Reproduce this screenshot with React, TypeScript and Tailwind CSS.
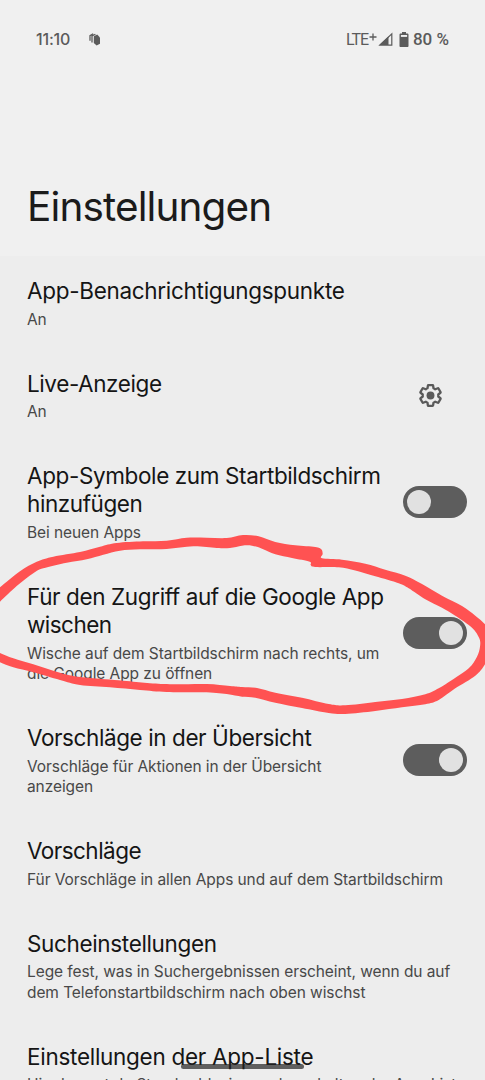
import { clsx } from 'clsx'

type Line = { text: string; tracking?: string }

type Setting = {
  title: Line[]
  summary: string[]
  control?: 'gear' | 'on' | 'off'
}

const settings: Setting[] = [
  {
    title: [{ text: 'App-Benachrichtigungspunkte', tracking: 'tracking-[-0.3px]' }],
    summary: ['An'],
  },
  {
    title: [{ text: 'Live-Anzeige', tracking: 'tracking-[-0.4px]' }],
    summary: ['An'],
    control: 'gear',
  },
  {
    title: [
      { text: 'App-Symbole zum Startbildschirm', tracking: 'tracking-[-0.38px]' },
      { text: 'hinzufügen', tracking: 'tracking-[-0.42px]' },
    ],
    summary: ['Bei neuen Apps'],
    control: 'off',
  },
  {
    title: [
      { text: 'Für den Zugriff auf die Google App', tracking: 'tracking-[-0.38px]' },
      { text: 'wischen', tracking: 'tracking-[-0.55px]' },
    ],
    summary: ['Wische auf dem Startbildschirm nach rechts, um', 'die Google App zu öffnen'],
    control: 'on',
  },
  {
    title: [{ text: 'Vorschläge in der Übersicht', tracking: 'tracking-[-0.41px]' }],
    summary: ['Vorschläge für Aktionen in der Übersicht', 'anzeigen'],
    control: 'on',
  },
  {
    title: [{ text: 'Vorschläge', tracking: 'tracking-[-0.54px]' }],
    summary: ['Für Vorschläge in allen Apps und auf dem Startbildschirm'],
  },
  {
    title: [{ text: 'Sucheinstellungen', tracking: 'tracking-[-0.35px]' }],
    summary: [
      'Lege fest, was in Suchergebnissen erscheint, wenn du auf',
      'dem Telefonstartbildschirm nach oben wischst',
    ],
  },
  {
    title: [{ text: 'Einstellungen der App-Liste', tracking: 'tracking-[-0.28px]' }],
    summary: ['Hier kannst du Standarddesign und -verhalten der App-Liste'],
  },
]

// Hand-drawn marker loop, outer and inner edge
const outerEdge = [
  [-8, 595], [0, 587.3], [20, 571.2], [36.7, 561.7], [53.3, 556.7], [80, 552], [100, 546.7], [116.7, 543],
  [143, 541.3], [166.7, 540.7], [186.7, 537.7], [206.7, 537.7], [226.7, 538], [243, 535], [258.7, 536.3],
  [275.3, 542], [295.3, 545.3], [315.3, 547], [321.3, 549.3], [322.7, 554], [322, 558.3], [342, 559.7],
  [365.3, 563.7], [385.3, 569.7], [405.3, 575.7], [422, 584], [442, 595.7], [462, 606], [475.3, 615.7],
  [485, 624.3], [491, 634], [491, 650], [485, 664.3], [475.3, 675.7], [455.3, 688.3], [438.7, 700],
  [425.3, 704.3], [402, 707.3], [375.3, 711], [345.3, 714], [328.7, 713], [302, 708], [275.3, 702.7],
  [255.3, 697.7], [242, 696.7], [226.7, 694], [203.3, 692.3], [166.7, 692], [140, 690], [110, 687.3],
  [80, 685], [60, 680], [33.3, 672.3], [13.3, 667.3], [0, 662.3], [-8, 659],
]

const innerEdge = [
  [-8, 649], [0, 653], [13.3, 658.3], [33.3, 664.3], [53.3, 670.7], [73.3, 676], [93.3, 678.3], [126.7, 681],
  [150, 683.3], [173.3, 684.3], [206.7, 684], [230, 686], [242, 687], [257, 688], [275.3, 692.7], [302, 697.7],
  [328.7, 704], [345.3, 705.3], [375.3, 702], [402, 699], [425.3, 694.3], [438.7, 688.3], [452, 680],
  [468.7, 668.3], [477, 656.7], [480, 646.7], [479.3, 638.3], [472, 627.7], [455.3, 615.7], [442, 607.7],
  [425.3, 599.3], [408.7, 588.3], [398.7, 583.3], [375.3, 576.3], [355.3, 570.5], [338.7, 567.3],
  [315.3, 567], [310.7, 565], [309.7, 561.7], [292, 558], [275.3, 554.3], [262, 548.7], [252, 545.7],
  [242, 545.7], [230, 548], [216.7, 548], [193.3, 546.3], [166.7, 549], [140, 549.3], [120, 550.7],
  [103.3, 554.7], [86.7, 559.3], [66.7, 562.7], [43.3, 568.3], [33.3, 573.3], [16.7, 586], [0, 601.7], [-8, 609],
]

// Catmull-Rom spline through the points, written as cubic segments
function spline(points: number[][]) {
  let d = ''
  for (let i = 0; i < points.length - 1; i++) {
    const p0 = points[i - 1] ?? points[i]
    const p1 = points[i]
    const p2 = points[i + 1]
    const p3 = points[i + 2] ?? p2
    const c1 = [p1[0] + (p2[0] - p0[0]) / 6, p1[1] + (p2[1] - p0[1]) / 6]
    const c2 = [p2[0] - (p3[0] - p1[0]) / 6, p2[1] - (p3[1] - p1[1]) / 6]
    d += `C${c1.join(' ')} ${c2.join(' ')} ${p2.join(' ')}`
  }
  return d
}

function MarkerLoop() {
  const d = `M${outerEdge[0].join(' ')}${spline(outerEdge)}L${innerEdge[0].join(' ')}${spline(innerEdge)}Z`
  return (
    <svg className="absolute inset-0 pointer-events-none" width="485" height="1080" viewBox="0 0 485 1080">
      <path d={d} fill="#ff5252" />
    </svg>
  )
}

function Toggle({ on }: { on: boolean }) {
  return (
    <div className={clsx('flex h-8 w-16 items-center rounded-full bg-[#5d5d5d] px-1', on && 'justify-end')}>
      <div className="h-6 w-6 rounded-full bg-[#e1e1e1]" />
    </div>
  )
}

function Gear() {
  return (
    <svg className="mr-6 mt-px" width="25" height="25" viewBox="0 0 24 24" fill="none">
      <path
        d="M19.43 12.98c.04-.32.07-.64.07-.98 0-.34-.03-.66-.07-.98l2.11-1.65c.19-.15.24-.42.12-.64l-2-3.46a.5.5 0 0 0-.61-.22l-2.49 1c-.52-.4-1.08-.73-1.69-.98l-.38-2.65A.49.49 0 0 0 14 2h-4c-.25 0-.46.18-.49.42l-.38 2.65c-.61.25-1.17.59-1.69.98l-2.49-1a.5.5 0 0 0-.61.22l-2 3.46c-.13.22-.07.49.12.64l2.11 1.65c-.04.32-.07.65-.07.98 0 .33.03.66.07.98l-2.11 1.65c-.19.15-.24.42-.12.64l2 3.46a.5.5 0 0 0 .61.22l2.49-1c.52.4 1.08.73 1.69.98l.38 2.65c.03.24.24.42.49.42h4c.25 0 .46-.18.49-.42l.38-2.65c.61-.25 1.17-.59 1.69-.98l2.49 1a.5.5 0 0 0 .61-.22l2-3.46c.12-.22.07-.49-.12-.64z"
        stroke="#5a5a5a"
        strokeWidth="2.2"
        strokeLinejoin="round"
      />
      <circle cx="12" cy="12" r="3.8" fill="#5a5a5a" />
    </svg>
  )
}

function StatusBar() {
  return (
    <div className="flex h-[78px] items-center pl-[36px] pr-[36px] text-[#5b5b5b]">
      <span className="text-base font-medium tracking-[-0.2px]">11:10</span>
      <svg className="ml-[19px] mt-px" width="12" height="13" viewBox="0 0 12 13">
        <path d="M4.8 3.2 8.2 1.6 11 4.4v6.4L7.6 12.4 4.8 10z" fill="#5b5b5b" />
        <path d="M3 9.6V3L6.4 1.2M1 7.8V2.6L4.2.8" fill="none" stroke="#5b5b5b" strokeWidth="1.3" />
      </svg>
      <div className="ml-auto flex items-center">
        <span className="mt-px font-['Roboto'] text-base tracking-[-1.1px]">LTE</span>
        <svg className="ml-[1px] mb-1" width="8" height="8" viewBox="0 0 8 8">
          <path d="M4 .5v7M.5 4h7" stroke="#5b5b5b" strokeWidth="1.3" />
        </svg>
        <svg className="ml-[1px]" width="15" height="14" viewBox="0 0 15 14">
          <path d="M13.8 1.8V13.2H1.8z" fill="none" stroke="#5b5b5b" strokeWidth="1.2" />
          <path d="M10.5 4.2V13H1.4z" fill="#5b5b5b" />
        </svg>
        <svg className="ml-[6px]" width="10" height="15" viewBox="0 0 10 15">
          <path d="M3 0h4v1.6h1.4c.6 0 1.1.5 1.1 1.1v11.2c0 .6-.5 1.1-1.1 1.1H1.6c-.6 0-1.1-.5-1.1-1.1V2.7c0-.6.5-1.1 1.1-1.1H3z" fill="#5b5b5b" />
          <path d="M1.9 3h6.2v1.9H1.9z" fill="#f0f0f0" />
        </svg>
        <span className="ml-1 mt-px font-['Roboto'] text-[17px] font-medium">80 %</span>
      </div>
    </div>
  )
}

function SettingRow({ title, summary, control }: Setting) {
  return (
    <div className="flex shrink-0 items-center justify-between py-5 pl-[27px] pr-[18px]">
      <div className="-mb-px whitespace-nowrap pt-px">
        <h2 className="text-[22.5px] leading-[28.3px] text-[#151515]">
          {title.map((line) => (
            <span key={line.text} className={clsx('block', line.tracking)}>
              {line.text}
            </span>
          ))}
        </h2>
        <p className="-mb-[0.4px] mt-[4.4px] text-[15.5px] leading-[20.3px] tracking-[-0.08px] text-[#484848]">
          {summary.map((line) => (
            <span key={line} className="block">
              {line}
            </span>
          ))}
        </p>
      </div>
      {control === 'gear' && <Gear />}
      {(control === 'on' || control === 'off') && <Toggle on={control === 'on'} />}
    </div>
  )
}

export default function App() {
  return (
    <div className="relative flex h-[1080px] w-[485px] flex-col overflow-hidden bg-[#f0f0f0] font-['Inter',sans-serif]">
      <StatusBar />
      <header className="flex h-[178px] shrink-0 items-end px-[27px] pb-[24px]">
        <h1 className="text-[40.5px] leading-[50px] tracking-[-0.88px] text-[#1b1b1b]">Einstellungen</h1>
      </header>
      <main className="flex flex-1 flex-col overflow-hidden bg-[#ededed]">
        {settings.map((setting) => (
          <SettingRow key={setting.title[0].text} {...setting} />
        ))}
      </main>
      <MarkerLoop />
      {/* gesture navigation handle */}
      <div className="absolute bottom-[11px] left-[181px] h-[5px] w-[123px] rounded-full bg-[#222222]/70" />
    </div>
  )
}
